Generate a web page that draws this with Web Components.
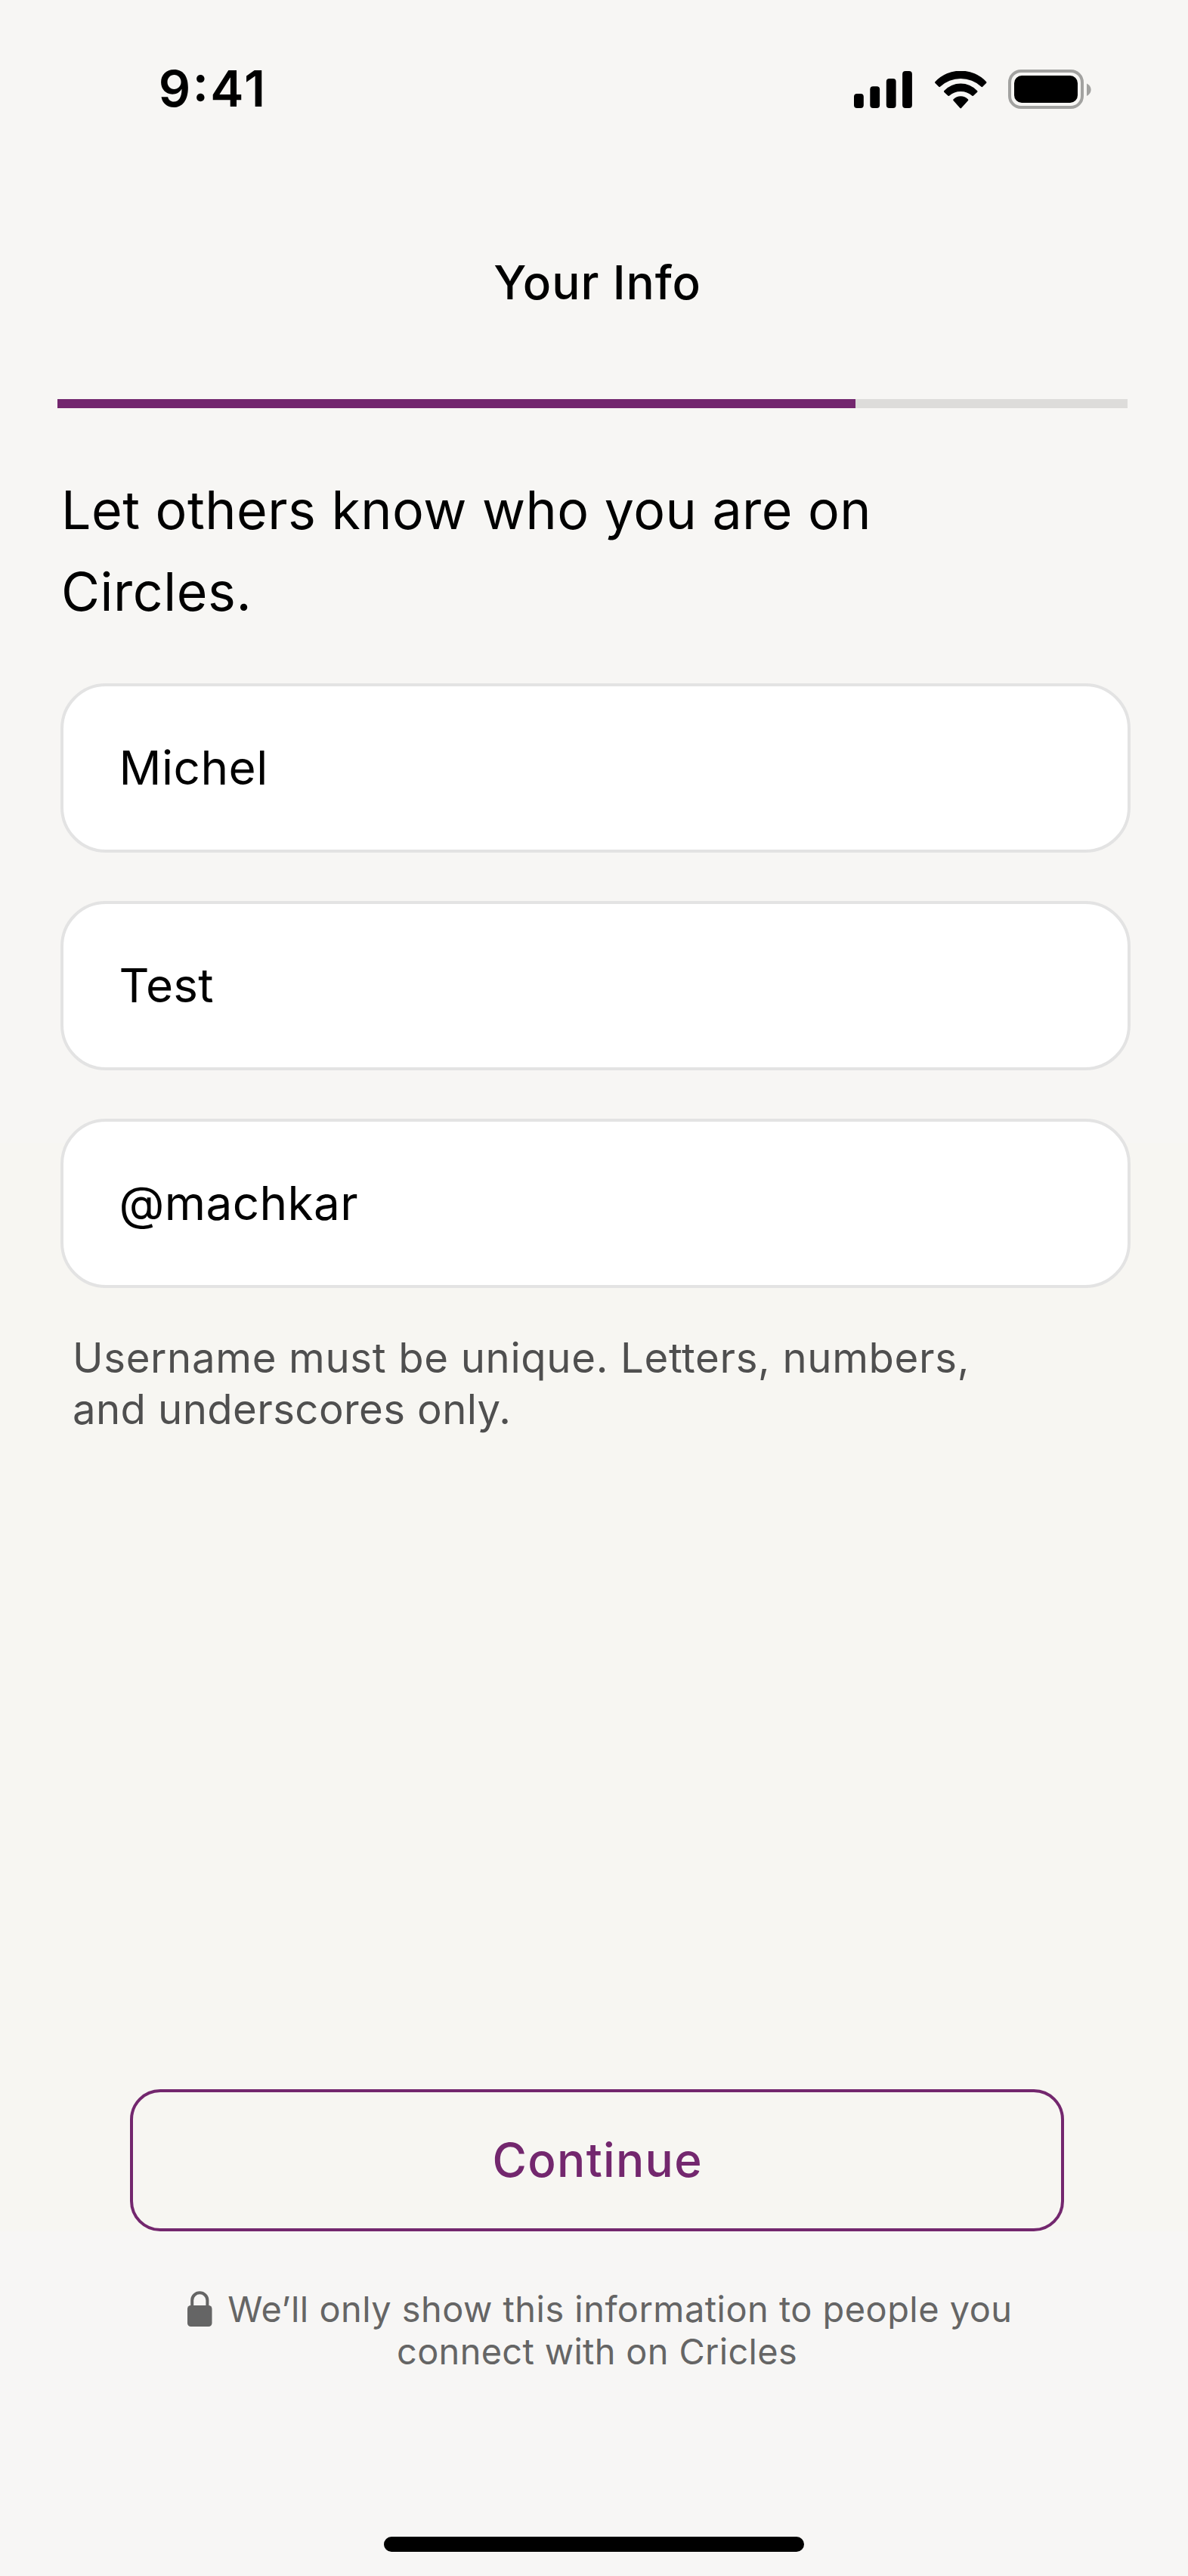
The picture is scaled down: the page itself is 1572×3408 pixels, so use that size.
<!DOCTYPE html>
<html lang="en">
<head>
<meta charset="utf-8">
<title>Your Info</title>
<style>
  html, body { margin: 0; }
  body { font-family: Inter, "Liberation Sans", sans-serif; color: #000; background: #f7f6f4; }
</style>
</head>
<body>
<info-screen></info-screen>
<script>
class Base extends HTMLElement {
  connectedCallback() {
    if (this.shadowRoot) return;
    this.attachShadow({ mode: 'open' }).innerHTML = this.render();
  }
}

/* One unwrapped line of text with its own tracking. */
class TextLine extends Base {
  render() {
    return `<style>:host{display:block;white-space:nowrap;letter-spacing:${this.getAttribute('track') || 0}px}</style><slot></slot>`;
  }
}

class StatusBar extends Base {
  render() {
    return `<style>
      :host{display:flex;justify-content:space-between;align-items:flex-start;height:80px;padding:77px 128px 0 209.7px}
      text-line{font-size:66.4px;font-weight:600;line-height:80px;font-feature-settings:"calt"}
      .icons{display:flex;align-items:flex-start;padding-top:15px}
      svg{display:block}
      .wifi{margin:2px 28px 0 30px}
    </style>
    <text-line track="2.5">9:41</text-line>
    <div class="icons">
      <svg width="77" height="52" viewBox="0 0 77 52">
        <rect x="0" y="32" width="12.8" height="19" rx="4"/>
        <rect x="21.3" y="22.3" width="12.8" height="28.7" rx="4"/>
        <rect x="42.8" y="12" width="12.8" height="39" rx="4"/>
        <rect x="64.1" y="2" width="12.8" height="49" rx="4"/>
      </svg>
      <svg class="wifi" width="69" height="50" viewBox="0 0 69 50">
        <path d="M0.6 14A46.5 46.5 0 0 1 67.9 14Q69 15 68 16L63.2 20.8Q62.4 21.6 61.5 20.8A40 40 0 0 0 7 20.8Q6.1 21.6 5.3 20.8L0.5 16Q-0.5 15 0.6 14Z"/>
        <path d="M12.4 26A29.9 29.9 0 0 1 56 26Q57 27 56 28L51.2 32.6Q50.3 33.4 49.4 32.7A23 23 0 0 0 19 32.7Q18.1 33.4 17.2 32.6L12.4 28Q11.4 27 12.4 26Z"/>
        <path d="M24.7 37.3A13.5 13.5 0 0 1 43.8 37.3Q44.8 38.3 43.8 39.3L35 49Q34.2 49.8 33.4 49L24.7 39.3Q23.7 38.3 24.7 37.3Z"/>
      </svg>
      <svg width="110" height="52" viewBox="0 0 110 52">
        <rect x="2" y="2" width="96" height="48" rx="15" fill="none" stroke="#a2a2a0" stroke-width="4"/>
        <path d="M104 18.6C107.4 20.1 109.6 23.3 109.6 26.8S107.4 33.5 104 35Z" fill="#a2a2a0"/>
        <rect x="8" y="8" width="84" height="36" rx="10"/>
      </svg>
    </div>`;
  }
}

class ProgressBar extends Base {
  render() {
    return `<style>
      :host{display:flex;height:12px;background:#dddcda}
      div{width:${this.getAttribute('value')}%;background:#73276e}
    </style><div></div>`;
  }
}

class TextField extends Base {
  render() {
    return `<style>
      :host{display:block;box-sizing:border-box;height:224px;border:4px solid #e3e3e3;border-radius:60px;background:#fff;padding:70px 0 0 73.5px;font-size:62px;line-height:75px}
    </style><slot></slot>`;
  }
}

class OutlineButton extends Base {
  render() {
    return `<style>
      :host{display:block;box-sizing:border-box;height:188px;border:4px solid #73276e;border-radius:40px}
      button{all:unset;box-sizing:border-box;display:flex;justify-content:center;width:100%;padding:52px 0 0 1.5px;color:#73276e;font:500 62px/75px Inter,"Liberation Sans",sans-serif}
    </style><button><slot></slot></button>`;
  }
}

class LockIcon extends Base {
  render() {
    return `<style>:host{display:block}svg{display:block}</style>
    <svg width="33" height="47" viewBox="0 0 33 47">
      <rect x="0" y="19" width="32.5" height="28" rx="4.5" fill="#656565"/>
      <path d="M6.2 21V12.2a10.1 9.9 0 0 1 20.2 0V21" fill="none" stroke="#656565" stroke-width="4"/>
    </svg>`;
  }
}

class InfoScreen extends Base {
  render() {
    return `<style>
      :host{display:flex;flex-direction:column;width:1572px;height:3408px;
        background:linear-gradient(#f7f6f4 0 1512px,#f7f6f2 1512px 2952px,#f7f6f5 2952px)}
      header{display:flex;justify-content:center;margin-top:179px;padding-left:9px;font-size:62px;font-weight:500;line-height:75px}
      progress-bar{margin:117px 80px 0 76px}
      h1{margin:80px 0 0 81px;font-size:69.8px;font-weight:400;line-height:109px}
      h1 text-line{height:108px}
      form{display:flex;flex-direction:column;gap:64px;margin:68px 76px 0 80px}
      .hint{margin:58px 0 0 96px;font-size:54.5px;line-height:68px;color:#4f4f4f}
      outline-button{margin:866px 164px 0 172px}
      footer{margin-top:75px;font-size:46.9px;line-height:56px;color:#656565}
      .row{display:flex;gap:20.3px;padding-left:248px}
      lock-icon{padding-top:4px;height:52px}
      .second{padding-left:525px}
      .home{align-self:center;width:556px;height:20px;border-radius:10px;background:#000;margin:217px 0 0}
    </style>
    <status-bar></status-bar>
    <header><text-line track="0.9">Your Info</text-line></header>
    <progress-bar value="74.576"></progress-bar>
    <h1><text-line track="0.5">Let others know who you are on</text-line><text-line track="0.6">Circles.</text-line></h1>
    <form>
      <text-field><text-line track="0.49">Michel</text-line></text-field>
      <text-field><text-line track="0.2">Test</text-line></text-field>
      <text-field><text-line track="0.4">@machkar</text-line></text-field>
    </form>
    <div class="hint"><text-line track="0.66">Username must be unique. Letters, numbers,</text-line><text-line track="0.4">and underscores only.</text-line></div>
    <outline-button><text-line track="1.3">Continue</text-line></outline-button>
    <footer>
      <div class="row"><lock-icon></lock-icon><text-line track="0.49">We’ll only show this information to people you</text-line></div>
      <text-line class="second" track="0.34">connect with on Cricles</text-line>
    </footer>
    <div class="home"></div>`;
  }
}

customElements.define('text-line', TextLine);
customElements.define('status-bar', StatusBar);
customElements.define('progress-bar', ProgressBar);
customElements.define('text-field', TextField);
customElements.define('outline-button', OutlineButton);
customElements.define('lock-icon', LockIcon);
customElements.define('info-screen', InfoScreen);
</script>
</body>
</html>
